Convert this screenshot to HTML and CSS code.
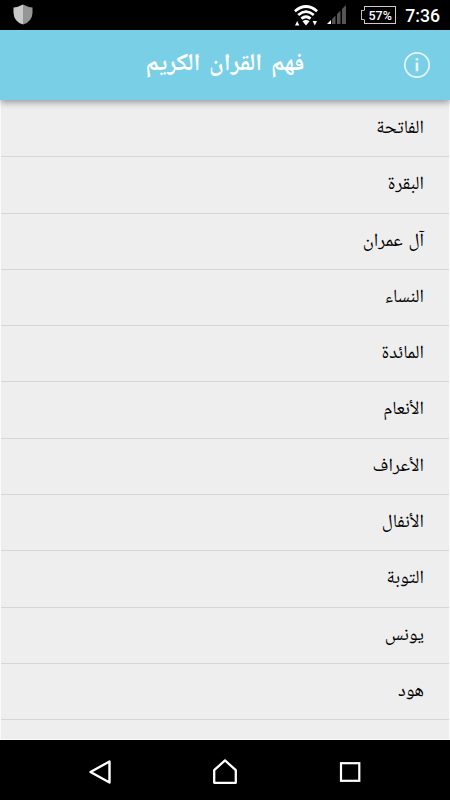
FILE: index.html
```html
<!DOCTYPE html>
<html lang="ar">
<head>
<meta charset="utf-8">
<title>فهم القران الكريم</title>
<link rel="stylesheet" href="styles.css">
</head>
<body>
<div class="screen">
  <div class="status">
    <svg class="shield" width="20" height="22" viewBox="0 0 20 22"><path d="M10 .5Q5 3.200 .5 3.500V9Q1 18 10 20.500Z" fill="#c9c9c9"/><path d="M10 .5Q15 3.200 19.500 3.500V9Q19 18 10 20.500Z" fill="#969696"/></svg>
    <div class="tray">
      <svg class="wifi" width="24" height="22" viewBox="0 0 24 22"><g fill="none" stroke="#fff" stroke-width="2.700"><path d="M.9 6.200Q12-3.200 23.100 6.200"/><path d="M4.200 10Q12 3.400 19.800 10"/><path d="M7.400 13.600Q12 9.900 16.600 13.600"/></g><path d="M8.500 16.300Q12 13.800 15.500 16.300L12 20.500Z M1 20.500 3.200 16 5.400 20.500Z M18.600 16H23L20.800 20.500Z" fill="#fff"/></svg>
      <svg class="signal" width="20" height="20" viewBox="0 0 20 20"><path d="M0 19 4 15V19Z" fill="#fff"/><path d="M5 14 8.500 10.500V19H5Z M10 9 13.500 5.500V19H10Z M15 4 19 0V19H15Z" fill="#555"/></svg>
      <div class="battery"><i class="nub"></i><span>57%</span></div>
      <span class="clock">7:36</span>
    </div>
  </div>
  <div class="appbar">
    <h1 dir="rtl">فهم القران الكريم</h1>
    <svg class="info" width="28" height="28" viewBox="0 0 28 28"><circle cx="14" cy="14" r="12.200" fill="none" stroke="#e6f7fb" stroke-width="1.700"/><path d="M12.700 11.500H15.300V20.300H12.700Z M12.700 7.300H15.300V9.600H12.700Z" fill="#e6f7fb"/></svg>
  </div>
  <ul class="list" dir="rtl">
    <li>الفاتحة</li>
    <li>البقرة</li>
    <li>آل عمران</li>
    <li>النساء</li>
    <li>المائدة</li>
    <li>الأنعام</li>
    <li>الأعراف</li>
    <li>الأنفال</li>
    <li>التوبة</li>
    <li>يونس</li>
    <li>هود</li>
  </ul>
  <div class="nav">
    <svg width="24" height="26" viewBox="0 0 24 26"><path d="M2.500 13 21.500 2.500V23.500Z" fill="none" stroke="#fff" stroke-width="2.400" stroke-linejoin="round"/></svg>
    <svg width="26" height="26" viewBox="0 0 26 26"><path d="M2.200 23.800V11.200L13 1.400 23.800 11.200V23.800Z" fill="none" stroke="#fff" stroke-width="2.300" stroke-linejoin="round"/></svg>
    <svg width="24" height="26" viewBox="0 0 24 26"><rect x="3" y="4.200" width="18.300" height="17.600" fill="none" stroke="#fff" stroke-width="2.200"/></svg>
  </div>
</div>
</body>
</html>
```
FILE: styles.css
```css
* { box-sizing: border-box; }
body { margin: 0; background: #000; }
.screen { width: 450px; height: 800px; display: flex; flex-direction: column; overflow: hidden; }
.status { height: 30px; flex: none; background: #000; display: flex; justify-content: space-between; align-items: center; padding: 0 10px 0 13px; }
.status svg { display: block; }
.tray { display: flex; align-items: center; }
.wifi { margin-top: 2px; }
.signal { margin-left: 9px; }
.battery { position: relative; width: 32px; height: 18px; margin-left: 17px; border: 1px solid #ccc; color: #fff; font: 500 12.500px/17px Roboto, sans-serif; text-align: center; display: flex; justify-content: center; }
.nub { position: absolute; left: -4px; top: 3px; width: 4px; height: 10px; border: 1px solid #bbb; border-right-color: #000; background: #000; }
.clock { margin-left: 9px; color: #fff; font: 500 17.700px/30px Roboto, sans-serif; padding-top: 1px; }
.appbar { height: 70px; flex: none; position: relative; z-index: 1; background: #79cfe6; box-shadow: 0 2px 7px rgba(0, 0, 0, .4); display: grid; grid-template-columns: 50px 1fr 50px; align-items: center; }
.appbar h1 { grid-column: 2; margin: 0; text-align: center; color: #fff; font: bold 24.200px/40px "Noto Naskh Arabic", "Noto Sans Arabic", "Noto Sans", "DejaVu Sans", sans-serif; word-spacing: 3.500px; }
.info { margin-left: 3px; }
.list { flex: 1; min-height: 0; overflow: hidden; margin: 0; padding: 1px 0 0; list-style: none; background: #eee; border: 1px solid #fafafa; border-top: 0; }
.list li { height: 56.300px; padding: 0 25px; border-bottom: 1px solid #d6d6d6; color: #000; font: 18.700px/56px "Noto Naskh Arabic", "Noto Sans Arabic", "Noto Sans", "DejaVu Sans", sans-serif; word-spacing: 1.500px; }
.nav { height: 60px; flex: none; background: #000; display: flex; justify-content: space-between; align-items: center; padding: 4px 88px 0; }
```
